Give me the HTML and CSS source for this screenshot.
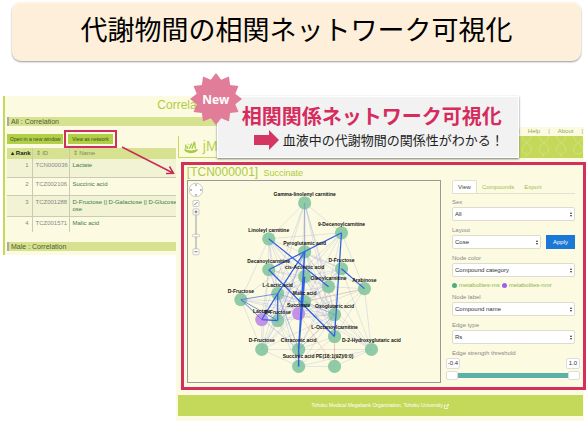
FILE: index.html
```html
<!DOCTYPE html>
<html lang="ja">
<head>
<meta charset="utf-8">
<title>代謝物間の相関ネットワーク可視化</title>
<link rel="stylesheet" href="styles.css">
</head>
<body>
<h1 class="banner">代謝物間の相関ネットワーク可視化</h1>

<main class="stage">
  <section class="list-window">
    <h2 class="list-title">Correlation</h2>
    <h3 class="strip">All : Correlation</h3>
    <div class="actions">
      <button type="button" class="action">Open in a new window</button>
      <span class="highlight"><button type="button" class="action">View as network</button></span>
    </div>
    <div class="table-clip">
      <table class="ranks">
        <thead>
          <tr><th class="rank sorted">▴ Rank</th><th class="id">⇕ ID</th><th>⇕ Name</th></tr>
        </thead>
        <tbody>
          <tr><td class="rank">1</td><td class="id">TCN000036</td><td><a href="#">Lactate</a></td></tr>
          <tr><td class="rank">2</td><td class="id">TCZ002106</td><td><a href="#">Succinic acid</a></td></tr>
          <tr><td class="rank">3</td><td class="id">TCZ001288</td><td><a href="#">D-Fructose || D-Galactose || D-Glucose || D-Mann<br>ose</a></td></tr>
          <tr><td class="rank">4</td><td class="id">TCZ001571</td><td><a href="#">Malic acid</a></td></tr>
        </tbody>
      </table>
    </div>
    <h3 class="strip">Male : Correlation</h3>
  </section>

  <section class="net-window">
    <nav class="top-links"><span>|</span><a href="#">Help</a><span>|</span><a href="#">About</a><span>|</span></nav>
    <header class="brand-bar">
      <div class="brand">
        <svg class="brand-mark" viewBox="0 0 18 16" aria-hidden="true">
          <path d="M3 10V5M5 10V7M7 10L10 4M10 10L13 2L14 10M6 5h1" fill="none" stroke="#a5cc3e" stroke-width="1.5"/>
          <path d="M1 10Q9 14 17 10Q16 15 9 15T1 10Z" fill="#a5cc3e"/>
        </svg>
        <span>jMorp</span>
      </div>
      <svg class="pattern" viewBox="0 0 66 22" aria-hidden="true">
        <g fill="none" stroke="#d3e180" stroke-width="1">
          <path d="M2 0Q2 4 7 7T12 14T7 19L6 22M12 0Q12 4 7 7T2 14T7 19"/>
          <path d="M20 0Q20 4 25 7T30 14T25 19L24 22M30 0Q30 4 25 7T20 14T25 19"/>
          <path d="M38 0Q38 4 43 7T48 14T43 19L42 22M48 0Q48 4 43 7T38 14T43 19"/>
          <path d="M56 0Q56 4 61 7T66 14T61 19M66 0Q66 4 61 7T56 14T61 19"/>
        </g>
      </svg>
    </header>

    <div class="viewer">
      <h2 class="compound">[TCN000001] <small>Succinate</small></h2>
      <div class="viewer-body">
        <svg class="network" viewBox="188 180 253 202" role="img" aria-label="Network">
          <g fill="none" stroke="#6a74dc" stroke-opacity=".23" stroke-width=".8">
            <path d="M305 202L262 319M305 202L278 293M305 202L305 251M305 202L305 301M305 202L299 349M305 202L329 286M305 202L335 314M305 202L342 232M305 202L269 238M305 202L335 336"/>
            <path d="M269 238L342 232M269 238L241 299M269 238L269 269M269 238L278 293M269 238L305 276M269 238L305 301M269 238L335 314M269 238L278 320M269 238L342 268M269 238L299 313"/>
            <path d="M342 232L305 276M342 232L278 293M342 232L329 286M342 232L305 301M342 232L335 314M342 232L305 251"/>
            <path d="M305 251L269 269M305 251L241 299M305 251L262 319M305 251L278 320M305 251L262 349M305 251L329 286M305 251L335 314M305 251L342 268M305 251L365 288M305 251L372 349M305 251L335 336"/>
            <path d="M269 269L305 276M269 269L262 319M269 269L278 293M269 269L305 301M269 269L335 314M269 269L329 286M269 269L262 349"/>
            <path d="M305 276L342 268M305 276L329 286M305 276L335 314M305 276L278 293M305 276L262 319M305 276L278 320M305 276L262 349M305 276L335 336M305 276L372 349"/>
            <path d="M342 268L278 293M342 268L305 301M342 268L329 286M342 268L299 313M342 268L278 320M342 268L299 349M342 268L372 349"/>
            <path d="M329 286L305 301M329 286L335 314M329 286L278 320M329 286L299 349M329 286L365 288M329 286L278 293"/>
            <path d="M365 288L305 301M365 288L335 314M365 288L372 349M365 288L335 336M365 288L299 313M365 288L342 232"/>
            <path d="M278 293L335 314M278 293L299 313M278 293L262 349M278 293L299 349M278 293L299 366M278 293L335 336M278 293L372 349"/>
            <path d="M241 299L305 301M241 299L262 349M241 299L299 349M241 299L299 313M241 299L335 314"/>
            <path d="M305 301L278 320M305 301L262 349M305 301L335 314M305 301L335 336M305 301L372 349M305 301L262 319"/>
            <path d="M335 314L299 313M335 314L278 320M335 314L262 319M335 314L262 349M335 314L299 349M335 314L299 366M335 314L372 349M335 314L335 336M335 314L335 366"/>
            <path d="M262 319L262 349M262 319L299 349M278 320L262 349M278 320L299 349M278 320L299 366M262 349L299 349M262 349L299 366M299 349L372 349M299 366L372 349M299 366L335 336M335 366L372 349M335 336L299 349M299 313L262 349M299 366L335 366"/>
          </g>
          <path d="M299 313L335 366M335 336L335 366M305 301L365 288" fill="none" stroke="#f0a080" stroke-opacity=".5" stroke-width=".8"/>
          <g fill="#86c7a0" fill-opacity=".92">
            <circle cx="305" cy="202" r="6.6"/><circle cx="342" cy="232" r="6.6"/><circle cx="269" cy="238" r="6.6"/>
            <circle cx="305" cy="251" r="6.6"/><circle cx="269" cy="269" r="6.6"/><circle cx="305" cy="276" r="6.6"/>
            <circle cx="342" cy="268" r="6.6"/><circle cx="329" cy="286" r="6.6"/><circle cx="365" cy="288" r="6.6"/>
            <circle cx="241" cy="299" r="6.6"/><circle cx="278" cy="293" r="6.6"/><circle cx="305" cy="301" r="6.6"/>
            <circle cx="278" cy="320" r="6.6"/><circle cx="335" cy="314" r="6.6"/><circle cx="335" cy="336" r="6.6"/>
            <circle cx="262" cy="349" r="6.6"/><circle cx="299" cy="349" r="6.6"/><circle cx="372" cy="349" r="6.6"/>
            <circle cx="299" cy="366" r="6.6"/><circle cx="335" cy="366" r="6.6"/>
          </g>
          <g fill="#c08ae4" fill-opacity=".92"><circle cx="299" cy="313" r="6.6"/><circle cx="262" cy="319" r="6.6"/></g>
          <path d="M305 202V251M305 251L278 320M305 251L305 276M305 301L335 314M278 293L305 301M335 314L299 349M278 293L299 349" fill="none" stroke="#5670d8" stroke-opacity=".4" stroke-width=".8"/>
          <g fill="none" stroke="#2f5fe6" stroke-width="1.2">
            <path d="M269 238L329 286M269 269L342 232M269 269L335 336M342 268L365 288M342 232L335 336"/>
            <path d="M278 293L262 319M278 293V320M262 319L278 320M305 251L278 293"/>
            <path d="M241 299L278 293M241 299L262 319M241 299L278 320" stroke-width=".8" stroke="#5577e0"/>
            <path d="M305 251L299 349L299 366M305 276L299 349" stroke-width="1.5"/>
          </g>
          <g class="node-labels">
            <text x="305" y="195">Gamma-linolenyl carnitine</text>
            <text x="342" y="225">9-Decenoylcarnitine</text>
            <text x="269" y="231">Linoleyl carnitine</text>
            <text x="305" y="244">Pyroglutamic acid</text>
            <text x="269" y="262">Decanoylcarnitine</text>
            <text x="305" y="268">cis-Aconitic acid</text>
            <text x="342" y="261">D-Fructose</text>
            <text x="329" y="279">Oleoylcarnitine</text>
            <text x="365" y="281">Arabinose</text>
            <text x="241" y="292">D-Fructose</text>
            <text x="278" y="286">L-Lactic acid</text>
            <text x="305" y="294">Malic acid</text>
            <text x="299" y="306">Succinate</text>
            <text x="262" y="312">Lactate</text>
            <text x="278" y="313">D-Fructose</text>
            <text x="335" y="307">Oxoglutaric acid</text>
            <text x="335" y="328">L-Octanoylcarnitine</text>
            <text x="262" y="342">D-Fructose</text>
            <text x="299" y="342">Citraconic acid</text>
            <text x="372" y="342">D-2-Hydroxyglutaric acid</text>
            <text x="299" y="358">Succinic acid</text>
            <text x="335" y="358">PE(18:1(9Z)/0:0)</text>
          </g>
          <g stroke="#aaa" stroke-width=".6" fill="#fff">
            <circle cx="196" cy="189" r="6.8"/>
            <rect x="193" y="199.500" width="6" height="6" rx="1"/>
            <rect x="193" y="208" width="6" height="6" rx="1"/>
            <rect x="192.500" y="233.500" width="7" height="2.500" rx="1"/>
            <rect x="193" y="248" width="6" height="6" rx="1"/>
            <path d="M195.500 214v19.500M196.500 214v19.500M195.500 236v12M196.500 236v12"/>
          </g>
          <path d="M196 183l1 1.500h-2zM196 195l1-1.500h-2zM190 189l1.500-1v2zM202 189l-1.500-1v2z" fill="#555"/>
          <path d="M194.500 204l3-3M194.500 211h3M196 209.500v3M194.500 251h3" stroke="#555" stroke-width=".8"/>
        </svg>

        <form class="panel">
          <div class="tabs">
            <button type="button" class="tab active">View</button>
            <button type="button" class="tab">Compounds</button>
            <button type="button" class="tab">Export</button>
          </div>
          <label class="label" for="sex">Sex</label>
          <div class="select"><select id="sex"><option>All</option></select></div>
          <label class="label" for="layout">Layout</label>
          <div class="row">
            <div class="select"><select id="layout"><option>Cose</option></select></div>
            <button type="button" class="apply">Apply</button>
          </div>
          <label class="label" for="node-color">Node color</label>
          <div class="select"><select id="node-color"><option>Compound category</option></select></div>
          <div class="legend"><span class="dot ms"></span><span>metabolites-ms</span><span class="dot nmr"></span><span>metabolites-nmr</span></div>
          <label class="label" for="node-label">Node label</label>
          <div class="select"><select id="node-label"><option>Compound name</option></select></div>
          <label class="label" for="edge-type">Edge type</label>
          <div class="select"><select id="edge-type"><option>Rs</option></select></div>
          <label class="label" for="low">Edge strength threshold</label>
          <div class="bounds"><output for="low">-0.4</output><output for="high">1.0</output></div>
          <div class="slider">
            <input type="range" id="low" min="-0.4" max="1" step="0.1" value="-0.4">
            <input type="range" id="high" min="-0.4" max="1" step="0.1" value="1" aria-label="Upper threshold">
          </div>
        </form>
      </div>
    </div>

    <footer class="foot">
      <a href="#">Tohoku Medical Megabank Organization, Tohoku University
        <svg class="ext" viewBox="0 0 6 6" aria-hidden="true"><path d="M4.500 3.500V5.500H.5V1.500H3M2.500 3.500L5.500.5M3.800.5H5.500V2.200" fill="none" stroke="#fff" stroke-width=".9"/></svg>
      </a>
    </footer>
  </section>

  <svg class="pointer" viewBox="0 0 56 30" aria-hidden="true">
    <path d="M2 2L53 28M46 28.500L53.500 28.200L49.500 21.500" fill="none" stroke="#c92a57" stroke-width="1.500"/>
  </svg>

  <aside class="callout">
    <p class="callout-title">相関関係ネットワーク可視化</p>
    <p class="callout-text">
      <svg class="arrow" viewBox="0 0 25 20" aria-hidden="true"><path d="M0 5H15V0L25 10L15 20V15H0Z" fill="#d43561"/></svg>
      血液中の代謝物間の関係性がわかる！
    </p>
    <div class="badge">
      <svg viewBox="-27 -27 54 54" aria-hidden="true">
        <path d="M0-26L5.200-19.300 13-22.500 14.100-14.100 22.500-13 19.300-5.200 26 0 19.300 5.200 22.500 13 14.100 14.100 13 22.500 5.200 19.300 0 26-5.200 19.300-13 22.500-14.100 14.100-22.500 13-19.300 5.200-26 0-19.300-5.200-22.500-13-14.100-14.100-13-22.500-5.200-19.300Z" fill="#e17d99"/>
      </svg>
      <span>New</span>
    </div>
  </aside>
</main>
</body>
</html>
```
FILE: styles.css
```css
* { box-sizing: border-box; }

body {
  margin: 0;
  background: #fff;
  font-family: "Liberation Sans", "Noto Sans CJK JP", sans-serif;
  font-size: 6px;
  color: #777;
  overflow-x: hidden;
}

h1, h2, h3, p { margin: 0; font-weight: normal; }
a { color: inherit; text-decoration: none; }
button, select { font: inherit; border: 0; margin: 0; padding: 0; }
svg { display: block; }

.banner {
  margin: 2px 5px 35px 12px;
  padding: 7px 0 12px;
  border-radius: 9px;
  background: #feefdb;
  box-shadow: 0 1px 2px #999, inset 0 1px 1px #fffbe8;
  color: #000;
  font-family: "Noto Sans CJK JP", sans-serif;
  font-size: 27px;
  line-height: 40px;
  text-align: center;
}

.stage { position: relative; padding-top: 31px; }

/* Ranking window, partly covered by the network window */
.list-window {
  position: absolute;
  top: 0;
  left: 3px;
  width: 62%;
  padding: 0 0 4px 2px;
  border-left: 2px solid #c5da5c;
  background: #fcfbe2;
}

.list-title {
  padding: 2px 0 5px;
  color: #b0cc3c;
  font-size: 12px;
  line-height: 14px;
  text-align: center;
}

.strip {
  padding-left: 2px;
  border-left: 2px solid #aaa;
  background: #d7e290;
  color: #4f5c32;
  line-height: 9px;
}

.actions { display: flex; align-items: center; gap: 1px; padding: 4px 0 0; }
.action { height: 10px; padding: 0 3px; background: #b1cf47; color: #3c4a1c; font-size: 5px; white-space: nowrap; }
.highlight { padding: 2px; border: 2px solid #cf2f5c; }
.highlight .action { display: block; padding: 0 4px; }

.table-clip { height: 84px; margin-bottom: 10px; overflow: hidden; }
.ranks { width: 100%; table-layout: fixed; border-collapse: collapse; line-height: 7px; }
.ranks th { height: 11px; padding: 2px 3px; background: #d7e290; color: #7c8560; font-weight: normal; text-align: left; }
.ranks th.sorted { padding: 2px 1px; color: #222; font-weight: bold; white-space: nowrap; }
.ranks td { height: 18px; padding: 3px; border-bottom: 1px solid #c8ccb0; vertical-align: top; color: #888; }
.ranks th + th, .ranks td + td { border-left: 1px solid #c8ccb0; }
.ranks tbody tr:nth-child(odd) { background: #f1f3d4; }
.ranks .rank { width: 25px; text-align: right; }
.ranks .id { width: 37px; }
.ranks td a { color: #3f7a4a; }

/* Network window */
.net-window {
  position: relative;
  margin: 0 2px 0 30%;
  padding: 0 1px 5px 2px;
  background: #fcfbe2;
}

.top-links { display: flex; justify-content: flex-end; gap: 8px; color: #8fae4c; line-height: 9px; }

.brand-bar {
  display: flex;
  justify-content: space-between;
  height: 22px;
  margin-bottom: 4px;
  border-bottom: 1px solid #c4d85a;
  background: #c4d85a;
}
.brand { display: flex; align-items: center; gap: 4px; width: 60px; padding-left: 4px; border-left: 1px solid #c4d85a; background: #fcfbe2; color: #b6d14c; font-size: 14px; line-height: 21px; }
.brand-mark { width: 16px; height: 14px; }
.pattern { height: 21px; }

.viewer {
  margin: 0 -3px 5px 3px;
  padding: 0 8px 4px 3px;
  border: 3px solid #d3305d;
}
.compound { color: #adca3a; font-size: 12px; line-height: 14px; }
.compound small { margin-left: 2px; font-size: 9px; }

.viewer-body { display: grid; grid-template-columns: 1fr 123px; gap: 11px; align-items: start; }
.network { width: 100%; border: 1px solid #999; }
.node-labels { fill: #111; font-size: 5px; font-weight: bold; text-anchor: middle; }

.tabs { display: flex; margin-bottom: 3px; border-bottom: 1px solid #e2e2cc; }
.tab { height: 13px; padding: 0 5px; background: none; color: #9dbb52; }
.tab.active { border: 1px solid #e2e2cc; border-bottom: 0; border-radius: 2px 2px 0 0; background: #fff; color: #444; }

.label { display: block; color: #888; line-height: 10px; }
.select { position: relative; flex: 1; margin-bottom: 4px; }
.select select {
  display: block;
  width: 100%;
  height: 14px;
  padding: 0 2px;
  border: 1px solid #dcdcd0;
  border-radius: 2px;
  background: #fff;
  color: #333;
  appearance: none;
}
.select::before, .select::after { content: ""; position: absolute; right: 3px; border: 1px solid transparent; }
.select::before { top: 4px; border-bottom: 2px solid #333; }
.select::after { top: 8px; border-top: 2px solid #333; }
.row { display: flex; gap: 5px; }
.apply { width: 29px; height: 14px; background: #1b78d6; color: #fff; }

.legend { display: flex; align-items: center; gap: 2px; margin-bottom: 3px; color: #8fb04c; line-height: 8px; white-space: nowrap; }
.dot { width: 5px; height: 5px; border-radius: 50%; }
.ms { background: #48b07c; }
.nmr { background: #a05fe8; }

.bounds { display: flex; justify-content: space-between; margin: 0 -5px 0 -6px; }
.bounds output { width: 14px; border: 1px solid #ddd; border-radius: 2px; background: #fff; color: #333; line-height: 9px; text-align: center; }

.slider { display: grid; margin: 1px -5px 0 -6px; }
.slider input { grid-area: 1 / 1; width: 100%; height: 10px; margin: 0; appearance: none; background: linear-gradient(#5bb0a8, #5bb0a8) center / 100% 5px no-repeat; }
.slider input + input { background: none; pointer-events: none; }
.slider input::-webkit-slider-thumb { width: 12px; height: 9px; border: 1px solid #ddd; border-radius: 2px; background: #fff; appearance: none; pointer-events: auto; }

.foot { background: #c4d85a; color: #fff; font-size: 5px; text-align: center; line-height: 21px; }
.ext { display: inline-block; width: 5px; height: 5px; vertical-align: middle; }

/* Annotations over the windows */
.pointer { position: absolute; top: 49px; left: 120px; width: 56px; height: 30px; }

.callout {
  position: absolute;
  top: 0;
  left: 37%;
  width: 302px;
  padding: 6px 6px 5px 24px;
  border: 1px solid #fff;
  background: #f2f2f2;
  box-shadow: 0 1px 2px #777;
  font-family: "Noto Sans CJK JP", sans-serif;
  white-space: nowrap;
}
.callout-title { color: #d62c5d; font-size: 20px; font-weight: bold; line-height: 25px; }
.callout-text { display: flex; align-items: center; gap: 4px; padding-left: 12px; color: #222; font-size: 13px; line-height: 24px; }
.arrow { width: 25px; height: 20px; }

.badge {
  position: absolute;
  top: -25px;
  left: -29px;
  display: grid;
  place-items: center;
  width: 54px;
  height: 54px;
}
.badge > * { grid-area: 1 / 1; }
.badge svg { width: 54px; height: 54px; }
.badge span { color: #fff; font-family: "Open Sans", sans-serif; font-size: 12px; font-weight: bold; }
```
